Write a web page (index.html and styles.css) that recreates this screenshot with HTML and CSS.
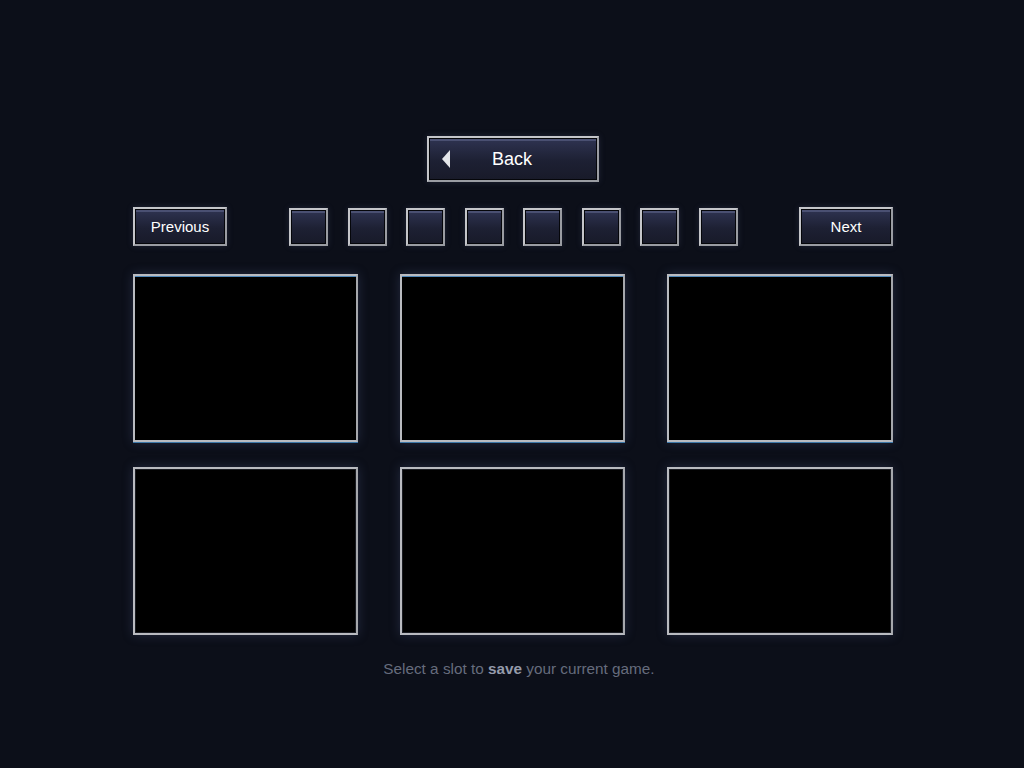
FILE: index.html
```html
<!DOCTYPE html>
<html lang="en">
<head>
    <meta charset="UTF-8">
    <title>Save Game</title>
    <link rel="stylesheet" href="styles.css">
</head>
<body>
<div class="pantalla">
    <div class="fila_back">
        <div class="boton boton_back"><span class="flecha"></span>Back</div>
    </div>
    <div class="fila_nav">
        <div class="boton boton_nav">Previous</div>
        <div class="paginas">
            <div class="boton pagina"></div>
            <div class="boton pagina"></div>
            <div class="boton pagina"></div>
            <div class="boton pagina"></div>
            <div class="boton pagina"></div>
            <div class="boton pagina"></div>
            <div class="boton pagina"></div>
            <div class="boton pagina"></div>
        </div>
        <div class="boton boton_nav">Next</div>
    </div>
    <div class="slots">
        <div class="slot slot_activo"></div>
        <div class="slot slot_activo"></div>
        <div class="slot slot_activo"></div>
        <div class="slot"></div>
        <div class="slot"></div>
        <div class="slot"></div>
    </div>
    <p class="ayuda">Select a slot to <b>save</b> your current game.</p>
</div>
</body>
</html>
```

FILE: styles.css
```css
html, body {
    margin: 0;
    height: 100%;
}
body {
    background-color: #0c0f19;
    font-family: "Liberation Sans", Arial, sans-serif;
}
.pantalla {
    width: 760px;
    margin: 0 0 0 133px;
    padding-top: 136px;
}
.fila_back {
    display: flex;
    justify-content: center;
    margin-bottom: 25px;
}
.boton {
    box-sizing: border-box;
    border: 2px solid #c4c5c9;
    border-right-color: #9a9ca2;
    border-bottom-color: #9a9ca2;
    background: linear-gradient(#2f3452, #1d2033 55%, #181a29);
    box-shadow: inset 0 0 0 1px #05060a, inset 0 2px 0 1px #4a5072, 0 0 6px rgba(90, 100, 140, 0.25);
    color: #ffffff;
    display: flex;
    align-items: center;
    justify-content: center;
    user-select: none;
    cursor: pointer;
}
.boton_back {
    position: relative;
    width: 172px;
    height: 46px;
    font-size: 18px;
    padding-right: 2px;
}
.flecha {
    position: absolute;
    left: 13px;
    top: 12px;
    width: 0;
    height: 0;
    border-top: 9px solid transparent;
    border-bottom: 9px solid transparent;
    border-right: 8px solid #e4e6ea;
}
.fila_nav {
    display: flex;
    justify-content: space-between;
    align-items: center;
    height: 39px;
    margin-bottom: 28px;
}
.boton_nav {
    width: 94px;
    height: 39px;
    font-size: 15px;
}
.paginas {
    display: flex;
    gap: 19.6px;
    padding-left: 1px;
}
.pagina {
    width: 39px;
    height: 38px;
}
.slots {
    display: grid;
    grid-template-columns: 225px 225px 226px;
    grid-template-rows: repeat(2, 168px);
    column-gap: 42px;
    row-gap: 25px;
}
.slot {
    box-sizing: border-box;
    background-color: #000000;
    border: 2px solid #b9bbc0;
    border-right-color: #a6a8ad;
    box-shadow: inset 0 0 0 1px #1a1c22, 0 0 10px rgba(80, 95, 140, 0.35);
}
.slot_activo {
    box-shadow: inset 0 1px 0 0 #4d86b8, 0 1px 0 0 #3d78a8, 0 0 10px rgba(80, 95, 140, 0.35);
}
.ayuda {
    margin: 25px 0 0;
    padding-left: 12px;
    text-align: center;
    font-size: 15.3px;
    color: #666c7d;
}
.ayuda b {
    color: #959bab;
}
```
